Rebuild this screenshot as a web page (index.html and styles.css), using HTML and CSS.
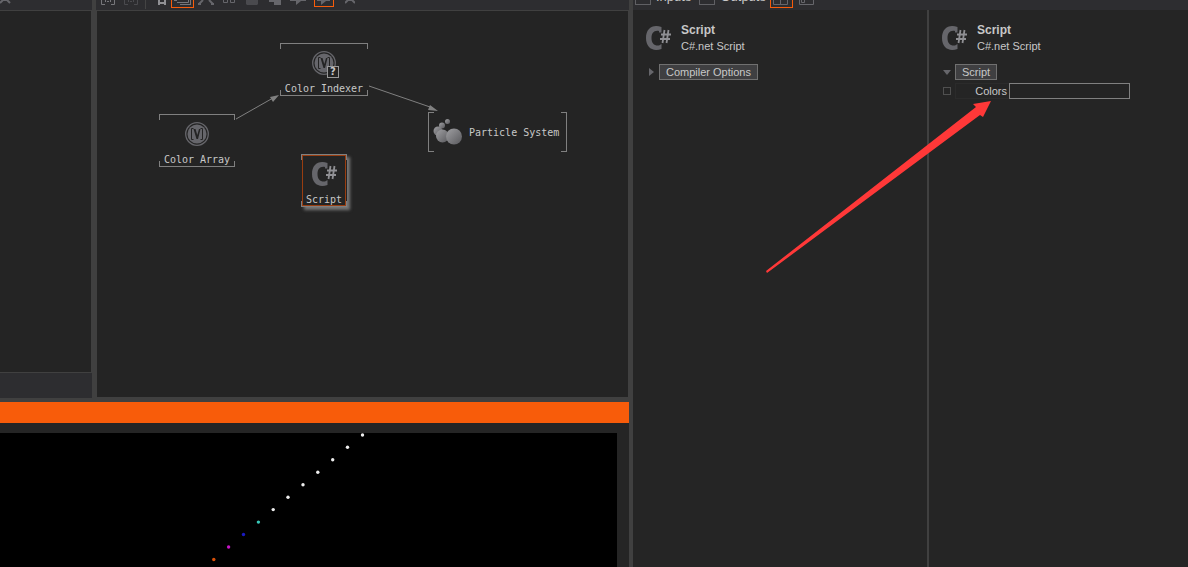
FILE: index.html
```
<!DOCTYPE html>
<html lang="en">
<head>
<meta charset="utf-8">
<title>Patch Editor</title>
<link rel="stylesheet" href="styles.css">
</head>
<body>
<svg class="defs" aria-hidden="true">
  <symbol id="csharp" viewBox="0 0 26 24">
    <path d="M16.500 1V6.500H14V5C9 4 6.500 7 6.500 12S9 20 14 19.500L16.500 18V23C7.500 26 1 21.500 1 12S7.500-2 16.500 1Z" fill="#66666b"/>
    <path d="M19.500 4 17.500 17M23.500 4 21.500 17M16 8.500H26M15 13H25" fill="none" stroke="#909094" stroke-width="1.800"/>
  </symbol>
  <symbol id="value" viewBox="0 0 24 24">
    <circle cx="12" cy="12" r="11.300" fill="none" stroke="#66666b" stroke-width="1.300"/>
    <circle cx="12" cy="12" r="9.500" fill="#66666b"/>
    <path d="M8.500 6.500H6.500V17.500H8.500M15.500 6.500H17.500V17.500H15.500" fill="none" stroke="#242424" stroke-width="1"/>
    <path d="M8.500 7H10.500L12.300 13 14 7H15.500L13 17H11.500Z" fill="#242424"/>
  </symbol>
</svg>
<div class="app">
  <main class="workspace">
    <div class="editors">
      <aside class="browser">
        <div class="toolbar">
          <button class="tool" aria-label="Collapse"><svg width="20" height="10"><path d="M0 3 3 0H7L10 3" fill="none" stroke="#66666b" stroke-width="2"/></svg></button>
        </div>
        <div class="browser-body"></div>
        <div class="browser-foot"></div>
      </aside>
      <section class="graph">
        <div class="toolbar">
          <button class="tool" aria-label="Frame all"><svg width="14" height="10"><path d="M.5 0V4.500H4M13.500 0V4.500H10M6 1.500H8M4.500 0V2M9.500 0V2" fill="none" stroke="#77777b"/></svg></button>
          <button class="tool" aria-label="Frame selected"><svg width="14" height="10"><path d="M.5 0V4.500H4M13.500 0V4.500H10M6 1.500H8M4.500 0V2M9.500 0V2" fill="none" stroke="#4a4a4e"/></svg></button>
          <span class="separator"></span>
          <button class="tool narrow" aria-label="Lock"><svg width="8" height="10"><path d="M1 5V0M7 5V0M1 3H7" fill="none" stroke="#909094" stroke-width="2"/></svg></button>
          <button class="tool active" aria-label="Layers"><svg width="18" height="10"><path d="M0 .5H3M3 2.500H12M14.500 0V2.500H12M6 4.500H17M16.500 0V4" fill="none" stroke="#77777b"/></svg></button>
          <button class="tool" aria-label="Expand"><svg width="16" height="10"><path d="M5 0 1 4M11 0 15 4M0 4H3M13 4H16" fill="none" stroke="#66666b" stroke-width="2"/></svg></button>
          <button class="tool" aria-label="Tile"><svg width="12" height="10"><path d="M.5-2V2.500H4.500V-2M7.500-2V2.500H11.500V-2" fill="none" stroke="#66666b"/></svg></button>
          <button class="tool" aria-label="Block"><svg width="12" height="10"><path d="M0 0H12V4L11 5H1L0 4Z" fill="#4a4a4e"/></svg></button>
          <button class="tool" aria-label="Group"><svg width="12" height="10"><path d="M0 0H5V2H0ZM5 0H12V5H5Z" fill="#66666b"/></svg></button>
          <button class="tool" aria-label="Comment"><svg width="16" height="10"><path d="M0 0H16V1H11L6 5V1H0Z" fill="#66666b"/></svg></button>
          <button class="tool active short" aria-label="Show comments"><svg width="16" height="10"><path d="M1 0H14V1H10L5 5V1H1Z" fill="#66666b"/></svg></button>
          <button class="tool" aria-label="Collapse all"><svg width="10" height="10"><path d="M0 3 3 0H7L10 3" fill="none" stroke="#66666b" stroke-width="2"/></svg></button>
        </div>
        <div class="canvas">
          <svg class="links" width="531" height="386" aria-hidden="true">
            <g stroke="#808080" fill="#808080"><path d="M139 108 176 87M272 75 336 97"/><path stroke="none" d="M182 84 173 86 176 91ZM341 100 333 94 331 99Z"/></g>
          </svg>
          <div class="node indexer">
            <svg class="icon" width="24" height="24"><use href="#value"/></svg><span class="query">?</span>
            <span class="name">Color Indexer</span>
          </div>
          <div class="node array">
            <svg class="icon" width="24" height="24"><use href="#value"/></svg>
            <span class="name">Color Array</span>
          </div>
          <div class="node script">
            <svg class="icon" width="26" height="24"><use href="#csharp"/></svg>
            <span class="name">Script</span>
          </div>
          <div class="node particle">
            <svg class="cloud" width="29" height="26" viewBox="0 0 29 26">
              <defs><linearGradient id="ball" x1="0" y1="0" x2="1" y2="1"><stop offset="0" stop-color="#a0a0a3"/><stop offset="1" stop-color="#58585c"/></linearGradient></defs>
              <g fill="url(#ball)"><circle cx="14.500" cy="2.500" r="2.500"/><circle cx="9" cy="6.500" r="3"/><circle cx="5" cy="12" r="4.500"/><circle cx="9.500" cy="17" r="6.500"/><circle cx="21" cy="17.500" r="8"/></g>
            </svg>
            <span class="name">Particle System</span>
          </div>
        </div>
      </section>
    </div>
    <div class="titlebar"></div>
    <section class="preview">
      <div class="viewport">
        <svg width="617" height="134" aria-label="Particle preview">
          <g fill="#eee"><circle cx="362.500" cy="2" r="1.700"/><circle cx="347.500" cy="14.300" r="1.700"/><circle cx="332.700" cy="26.800" r="1.700"/><circle cx="317.800" cy="39.200" r="1.700"/><circle cx="303" cy="51.700" r="1.700"/><circle cx="288" cy="64.200" r="1.700"/><circle cx="273.200" cy="76.600" r="1.700"/></g>
          <circle cx="258.400" cy="89.100" r="1.700" fill="#38c8b8"/><circle cx="243.500" cy="101.500" r="1.700" fill="#1a1ac0"/><circle cx="228.600" cy="114" r="1.700" fill="#c814c8"/><circle cx="213.800" cy="126.500" r="1.700" fill="#d85008"/>
        </svg>
      </div>
    </section>
  </main>
  <aside class="inspector">
    <div class="toolbar options">
      <label class="option"><input type="checkbox">Inputs</label>
      <label class="option"><input type="checkbox">Outputs</label>
      <button class="tool active" aria-label="Two columns"><svg width="16" height="10"><path d="M.5-2V4.500H14.500V-2M7.500 0V4" fill="none" stroke="#66666b"/></svg></button>
      <button class="tool" aria-label="Show values"><svg width="15" height="10"><path d="M.5-2V4.500H14.500V-2M2.500 0V2.500H5.500V0" fill="none" stroke="#66666b"/></svg></button>
    </div>
    <div class="columns">
      <section class="column">
        <header class="heading"><svg width="26" height="24"><use href="#csharp"/></svg><div><h2>Script</h2><p>C#.net Script</p></div></header>
        <div class="row"><span class="arrow closed"></span><button class="group">Compiler Options</button></div>
      </section>
      <section class="column">
        <header class="heading"><svg width="26" height="24"><use href="#csharp"/></svg><div><h2>Script</h2><p>C#.net Script</p></div></header>
        <div class="row"><span class="arrow open"></span><button class="group">Script</button></div>
        <div class="row property"><input class="expose" type="checkbox" aria-label="Expose Colors"><label for="colors">Colors</label><input class="value" id="colors" type="text"></div>
      </section>
    </div>
  </aside>
  <svg class="pointer" width="226" height="172" aria-hidden="true"><path d="M225 0 207 3 210 6 0 170 1 172 214 14 217 16Z" fill="#ff3838"/></svg>
</div>
</body>
</html>
```
FILE: styles.css
```
* { box-sizing: border-box; }
body { margin: 0; background: #252525; color: #c8c8c8; font: 11px/16px "Liberation Sans", Arial, sans-serif; }
button, input { font: inherit; color: inherit; margin: 0; }
.defs { position: absolute; width: 0; height: 0; }
.app { position: relative; display: grid; grid-template-columns: 629fr 559fr; min-height: 100vh; overflow: hidden; }
.workspace { display: flex; flex-direction: column; min-width: 0; }
.editors { display: grid; grid-template-columns: 92px 1fr; column-gap: 4px; flex: 3 0 402px; padding-bottom: 4px; background: #404040; }
.browser, .graph { display: flex; flex-direction: column; min-width: 0; }
.toolbar { display: flex; flex: none; height: 10px; overflow: hidden; background: #2d2d30; }
.browser-body { flex: 1; margin: 1px 1px 1px 0; background: #242424; }
.browser-foot { height: 25px; background: #2d2d30; }
.tool { display: flex; justify-content: center; flex: none; width: 23px; height: 10px; padding: 0; border: 0; background: none; }
.tool svg { flex: none; }
.browser .tool { width: 20px; }
.tool.narrow { width: 19px; }
.tool.active { height: 8px; border: solid #f85c0a; border-width: 0 1px 1px; overflow: hidden; }
.tool.short { height: 7px; width: 20px; margin: 0 4px 0 5px; }
.separator { width: 1px; margin: 0 6px 1px 3px; background: #444; }
.canvas { position: relative; flex: 1; min-height: 386px; margin: 1px 1px 1px 1px; background: #242424; overflow: hidden; }
.links { position: absolute; left: 0; top: 0; }
.node { position: absolute; display: flex; flex-direction: column; align-items: center; height: 53px; padding-top: 8px; font: 10px/14px "DejaVu Sans Mono", monospace; white-space: nowrap; }
.node::before, .node::after { content: ""; position: absolute; left: 0; right: 0; height: 5px; border: 1px solid #808080; }
.node::before { top: 0; border-bottom: 0; }
.node::after { bottom: 0; border-top: 0; }
.icon { flex: none; }
.name { margin-top: 7px; }
.indexer { left: 183px; top: 32px; width: 88px; }
.array { left: 62px; top: 103px; width: 76px; }
.script { left: 204px; top: 143px; width: 46px; background: #242424; box-shadow: 3px 3px 3px #777; outline: 1px solid #993d10; outline-offset: -2px; }
.query { position: absolute; left: 47px; top: 23px; width: 12px; height: 12px; border: 1px solid #999; background: #242424; font: bold 10px/10px "DejaVu Sans", sans-serif; text-align: center; }
.particle { left: 331px; top: 101px; width: 139px; height: 40px; flex-direction: row; align-items: center; gap: 7px; padding: 0 5px; }
.particle::before, .particle::after { top: 0; bottom: 0; width: 5px; height: auto; border: 1px solid #808080; }
.particle::before { right: auto; border-right: 0; }
.particle::after { left: auto; border-left: 0; }
.particle .name { margin-top: 1px; }
.titlebar { height: 21px; flex: none; background: #f85c0a; }
.preview { flex: 1 0 144px; display: flex; padding: 10px 12px 0 0; }
.viewport { flex: 1; min-width: 0; background: #000; overflow: hidden; }
.viewport svg { display: block; }
.inspector { display: flex; flex-direction: column; min-width: 0; border-left: 4px solid #404040; }
.options { padding-left: 2px; font-size: 13px; }
.option { display: flex; align-items: flex-start; gap: 5px; height: 16px; margin: -11px 8px 0 0; line-height: 16px; }
.option + .tool { margin-left: -4px; }
.options .tool + .tool { margin-left: 2px; }
input[type="checkbox"] { appearance: none; width: 16px; height: 16px; border: 1px solid #606064; background: transparent; }
.columns { display: grid; grid-template-columns: 294fr 261fr; flex: 1; }
.column { min-width: 0; padding: 12px; }
.column + .column { border-left: 2px solid #404040; }
.heading { display: flex; align-items: center; gap: 10px; margin-bottom: 10px; }
.heading h2, .heading p { margin: 0; font-size: 11px; line-height: 16px; }
.heading h2 { font-size: 12px; }
.row { display: flex; align-items: center; height: 16px; margin-bottom: 3px; }
.arrow { width: 14px; flex: none; }
.arrow::before { content: ""; display: block; width: 0; border: 4px solid transparent; }
.closed::before { margin-left: 4px; border-left: 5px solid #66666b; border-right: 0; }
.open::before { margin-left: 2px; border-top: 5px solid #66666b; border-bottom: 0; }
.group { height: 16px; padding: 0 6px; border: 1px solid #707070; background: #3f3f41; line-height: 14px; }
.property .expose { width: 8px; height: 8px; margin: 0 4px 0 2px; border-color: #505050; }
.property label { width: 54px; height: 16px; padding-right: 2px; border: 1px solid #2b2b2b; border-right: 0; text-align: right; line-height: 14px; }
.value { width: 121px; height: 16px; padding: 0 4px; border: 1px solid #808080; background: #242424; }
.pointer { position: absolute; left: 766px; top: 101px; }
```
